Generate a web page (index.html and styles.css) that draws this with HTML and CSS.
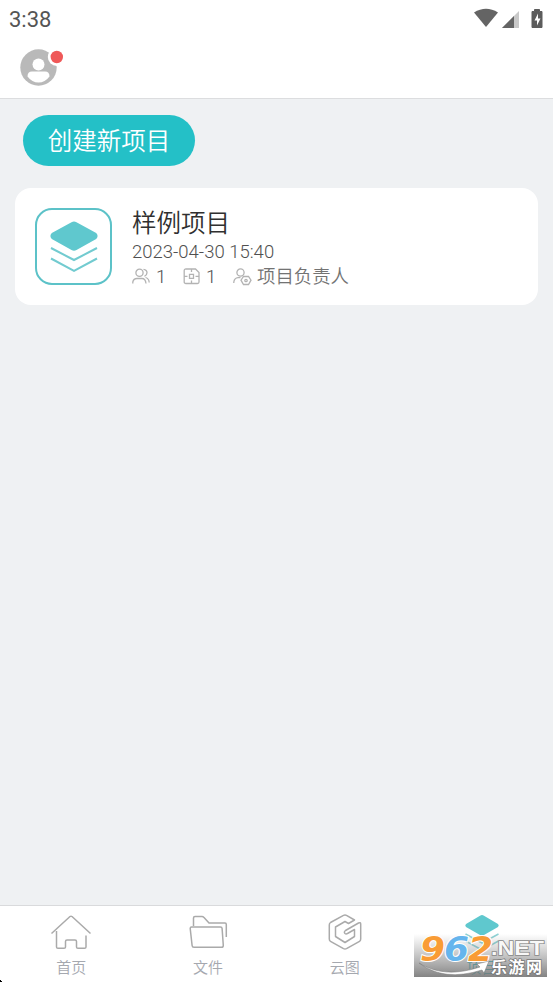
FILE: index.html
```html
<!DOCTYPE html>
<html lang="zh-CN">
<head>
<meta charset="utf-8">
<title>项目</title>
<link rel="stylesheet" href="styles.css">
</head>
<body>
<div class="app">
  <div class="status">
    <span class="time">3:38</span>
    <svg class="signals" width="76" height="24" viewBox="0 0 76 24">
      <path d="M0 6.500Q12 -1 24 6.500L12 21Z" fill="#646464"/>
      <path d="M28 22L45 5V22Z" fill="#c8c8c8"/>
      <path d="M28 22L40 10V22Z" fill="#646464"/>
      <path d="M58 5.500H60.500V3.500H65.500V5.500H68V21.500H58Z" fill="#5c5c5c" stroke="#5c5c5c" stroke-linejoin="round"/>
      <path d="M64 7.500L60.500 14.500H63V19.500L66.500 12.500H64Z" fill="#fff"/>
    </svg>
  </div>
  <header class="header">
    <svg width="48" height="40" viewBox="0 0 48 40">
      <circle cx="18.500" cy="19.500" r="18.200" fill="#b9b9b9"/>
      <circle cx="18.500" cy="16.500" r="6" fill="#fff"/>
      <path d="M12 23.500H25Q29.500 23.500 29.500 28.500Q25 34.500 18.500 34.500T7.500 28.500Q7.500 23.500 12 23.500Z" fill="#fff"/>
      <circle cx="36.800" cy="9" r="9" fill="#fff"/>
      <circle cx="36.800" cy="9" r="6.200" fill="#ef5858"/>
    </svg>
  </header>
  <main class="main">
    <button class="create">创建新项目</button>
    <section class="card">
      <div class="thumb">
        <svg width="50" height="54" viewBox="0 0 50 54">
          <path d="M22.500 2.300Q25 .8 27.500 2.300L47.200 13Q50 16 47.200 19L27.500 30Q25 31.400 22.500 30L2.800 19Q0 16 2.800 13Z" fill="#5fc8ce"/>
          <path d="M2 28L25 40L48 28M2 38.500L25 50.800L48 38.500" fill="none" stroke="#72cbd0" stroke-width="2"/>
        </svg>
      </div>
      <div class="info">
        <h1 class="title">样例项目</h1>
        <div class="date">2023-04-30 15:40</div>
        <div class="meta">
          <svg class="people" width="18" height="17" viewBox="0 0 18 17">
            <circle cx="7.500" cy="4.800" r="3.600"/><path d="M.8 15.500V14Q1.500 10.500 5 10.500H10Q13.500 10.500 14 15.500M11.500 1.300Q15 1.800 15 4.800Q15 7 12.500 8.300M13.500 9.500Q17 10.500 17.200 14.500"/>
          </svg>
          <span class="count">1</span>
          <svg class="drawing" width="17" height="17" viewBox="0 0 17 17">
            <path d="M3 1H12.500L16 4.500V14Q16 15.500 14.500 15.500H3Q1.200 15.500 1.200 14V2.500Q1.200 1 3 1ZM6.500 6.300H10.500V10.300H6.500ZM8.500 1V4M8.500 12.500V15.500M1.200 8.300H4.500M12.500 8.300H16"/>
          </svg>
          <span class="count">1</span>
          <svg class="role" width="19" height="18" viewBox="0 0 19 18">
            <circle cx="7.500" cy="4.500" r="3.600"/><path d="M.8 15V14Q1.500 10 5 9.700H7.500M10.500 8.500H15.500L18 12.200L15.500 16.500H10.500L8 12.200Z"/><circle cx="13" cy="12.500" r="1.200"/>
          </svg>
          <span>项目负责人</span>
        </div>
      </div>
    </section>
  </main>
  <nav class="tabs">
    <div class="tab">
      <svg width="42" height="40" viewBox="0 0 42 40">
        <path d="M1.500 20.500L20 3.500Q21 2.800 22 3.500L40.500 20.500M6.500 18V34Q6.500 35.300 8 35.300H14Q15.500 35.300 15.500 34V28.500Q15.500 27 17 27H25Q26.500 27 26.500 28.500V34Q26.500 35.300 28 35.300H34.500Q36 35.300 36 34V22.500"/>
      </svg>
      <span>首页</span>
    </div>
    <div class="tab">
      <svg width="42" height="40" viewBox="0 0 42 40">
        <path d="M6.500 13V5Q6.500 3.500 8 3.500H15Q16 3.500 17 4.500L22 10H38Q39.300 10 39.300 11.500V24M4.500 14H33.500Q35 14 35.100 15.500L36.300 32.500Q36.300 34.300 34.500 34.300H7Q5.200 34.300 5.100 32.500L3.200 15.500Q3.200 14 4.500 14Z"/>
      </svg>
      <span>文件</span>
    </div>
    <div class="tab">
      <svg width="42" height="40" viewBox="0 0 42 40">
        <path d="M30.500 7L22.500 2.300Q21 1.500 19.500 2.300L6.500 9.500Q5.300 10.300 5.300 12V26Q5.300 27.500 6.500 28.300L19.500 35.700Q21 36.500 22.500 35.700L35.500 28.300Q36.700 27.500 36.700 26V11Q36.700 9 34.500 10L21.500 17.500Q19.500 19 21 20.500Q22 21.300 23.500 20.500L30.500 16.500V23.500L21 29.500L11.500 23.500V14L21 8.500L24.500 10.500Z"/>
      </svg>
      <span>云图</span>
    </div>
    <div class="tab active">
      <svg width="42" height="40" viewBox="0 0 42 40">
        <path class="top" d="M19 2.700Q21 1.500 23 2.700L37 11Q38.500 12.500 37 14L23 22Q21 23 19 22L5 14Q3.500 12.500 5 11Z"/>
        <path d="M4.500 21L21 30L37.500 21M4.500 28L21 37L37.500 28"/>
      </svg>
      <span>项目</span>
    </div>
  </nav>
  <svg class="watermark" width="133" height="44" viewBox="0 0 133 44">
    <defs>
      <linearGradient id="shade" x2="0" y2="1"><stop stop-color="#888" stop-opacity="0"/><stop offset="1" stop-color="#767676" stop-opacity=".9"/></linearGradient>
    </defs>
    <rect width="133" height="43" fill="url(#shade)"/>
    <g class="digits">
      <text x="6" y="27" textLength="25" lengthAdjust="spacingAndGlyphs" fill="#f99c35">9</text>
      <text x="30" y="27" textLength="25" lengthAdjust="spacingAndGlyphs" fill="#65b5ed">6</text>
      <text x="54" y="27" textLength="25" lengthAdjust="spacingAndGlyphs" fill="#f99c35">2</text>
    </g>
    <text class="net" x="77" y="21" textLength="53" lengthAdjust="spacingAndGlyphs">.NET</text>
    <path d="M5 29Q30 45 66 33L63 30L75 27L70 39L68 36Q30 48 5 29Z" fill="#fff" stroke="#777" stroke-width=".5"/>
    <text class="site" x="77" y="38.500" textLength="51">乐游网</text>
  </svg>
  <svg class="corner" width="2" height="4"><path d="M0 0H1V1H2V2H0Z"/></svg>
</div>
</body>
</html>
```
FILE: styles.css
```css
* { box-sizing: border-box; }
body { margin: 0; background: #eff1f3; font-family: Roboto, "Noto Sans CJK SC", sans-serif; }
.app { position: relative; width: 553px; height: 983px; display: flex; flex-direction: column; overflow: hidden; }
.status { height: 40px; padding: 6px 7px 0 9px; display: flex; justify-content: space-between; background: #fff; }
.time { font-size: 22px; line-height: 27px; font-weight: 400; color: #555; }
.signals { margin-right: -4px; }
.header { height: 59px; padding: 8px 20px; background: #fff; border-bottom: 1px solid #dcdddf; }
.header svg { display: block; }
.main { flex: 1; padding: 16px 15px; background: #eff1f3; }
.create { display: block; width: 172px; height: 51px; margin: 0 0 22px 8px; padding: 0 0 1px; border: 0; border-radius: 26px; background: #24c0c7; color: #fff; font: 350 24.500px/48px "Noto Sans CJK SC", sans-serif; }
.card { display: flex; height: 117px; padding: 19px 20px; border-radius: 16px; background: #fff; }
.thumb { width: 77px; height: 77px; margin-top: 1px; border: 2px solid #5cc2c8; border-radius: 17px; display: grid; place-items: center; }
.info { margin-left: 20px; color: #737373; }
.title { margin: -1px 0 0; font: 350 24.500px/31px "Noto Sans CJK SC", sans-serif; color: #303030; }
.date { font-size: 18.500px; line-height: 26px; margin-top: 2px; font-weight: 300; color: #505050; }
.meta { display: flex; align-items: center; height: 24px; font-size: 18.400px; line-height: 24px; font-weight: 350; white-space: nowrap; }
.meta svg { fill: none; stroke: #b3b3b3; stroke-width: 1.300; margin-top: -1px; }
.count { width: 10px; margin-left: 6px; font-weight: 300; color: #505050; }
.drawing, .role { margin-left: 17px; }
.role + span { margin-left: 5px; }
.tabs { height: 78px; padding: 0 3px; display: flex; background: #fff; border-top: 1px solid #d9dadc; }
.tab { width: 136.800px; padding-top: 7px; display: flex; flex-direction: column; align-items: center; font-size: 15px; line-height: 22px; font-weight: 350; color: #a5a8af; }
.tab svg { fill: none; stroke: #aaa; stroke-width: 1.500; stroke-linejoin: round; }
.tab span { margin-top: 4px; }
.active { color: #35bdc4; }
.active svg { stroke: #8dd2d5; }
.active .top { fill: #5fc8ce; stroke: none; }
.watermark { position: absolute; left: 414px; top: 934px; overflow: visible; }
.digits { font: italic bold 33px "DejaVu Sans", sans-serif; stroke: #fff; stroke-width: 2px; paint-order: stroke; }
.net { font: bold 20px "Liberation Sans", sans-serif; fill: #f8f8f8; stroke: #888; stroke-width: 1.500px; paint-order: stroke; }
.site { font: bold 16px "Noto Sans CJK SC", sans-serif; fill: #fff; stroke: #777; stroke-width: 1.500px; paint-order: stroke; }
.corner { position: absolute; left: 0; top: 980px; }
```
